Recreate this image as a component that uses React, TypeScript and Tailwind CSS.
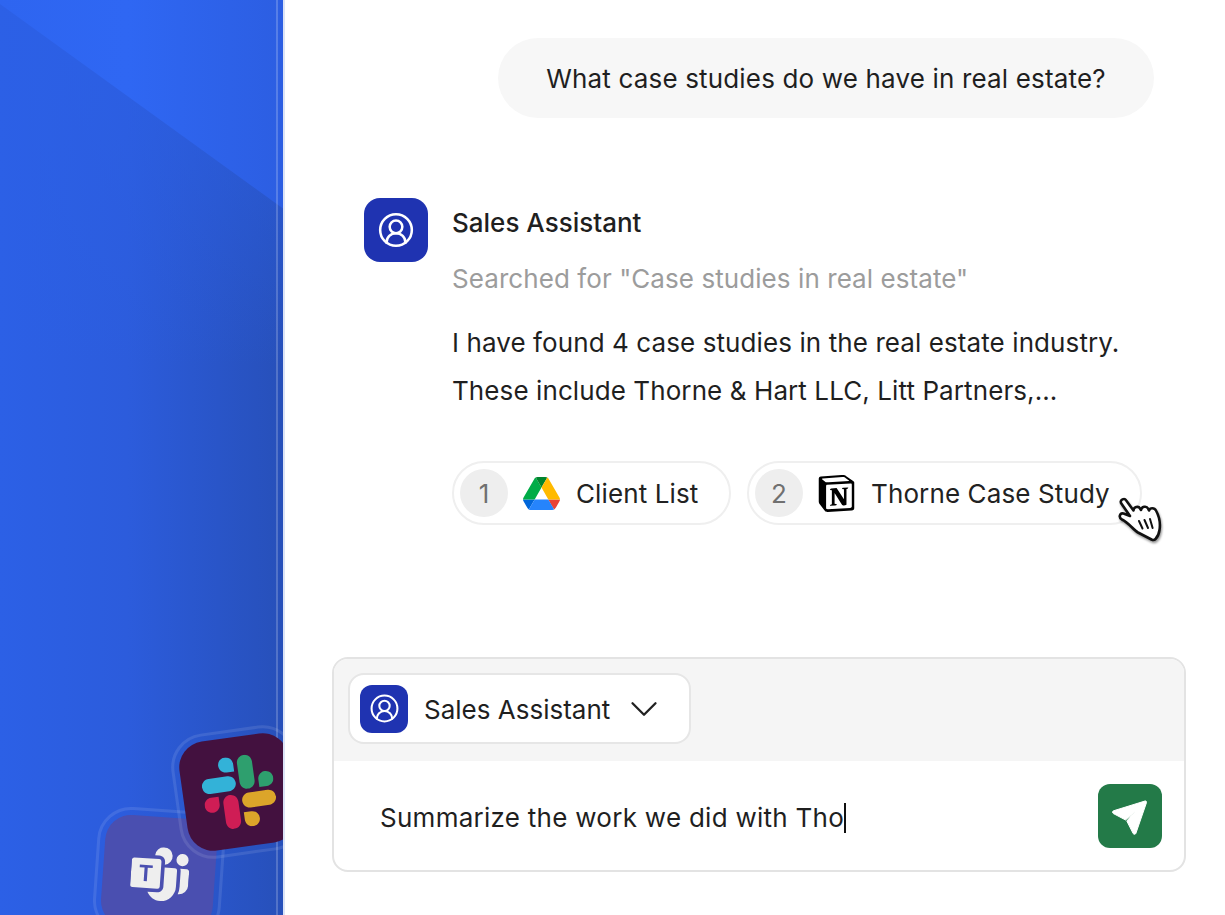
import React from 'react';
import { ChevronDown, CircleUserRound } from 'lucide-react';
import { BsMicrosoftTeams } from 'react-icons/bs';
import { SiNotion } from 'react-icons/si';

const DriveLogo = () => (
  <svg viewBox="0 0 87.3 78" className="w-[37px] h-[33px]">
    <path d="m6.6 66.85 3.85 6.65c.8 1.4 1.95 2.5 3.3 3.3l13.75-23.8h-27.5c0 1.55.4 3.1 1.2 4.5z" fill="#0066da" />
    <path d="m43.65 25-13.75-23.8c-1.35.8-2.5 1.9-3.3 3.3l-25.4 44a9.06 9.06 0 0 0 -1.2 4.5h27.5z" fill="#00ac47" />
    <path d="m73.55 76.8c1.35-.8 2.5-1.9 3.3-3.3l1.6-2.75 7.65-13.25c.8-1.4 1.2-2.95 1.2-4.5h-27.502l5.852 11.5z" fill="#ea4335" />
    <path d="m43.65 25 13.75-23.8c-1.35-.8-2.9-1.2-4.5-1.2h-18.5c-1.6 0-3.15.45-4.5 1.2z" fill="#00832d" />
    <path d="m59.8 53h-32.3l-13.75 23.8c1.35.8 2.9 1.2 4.5 1.2h50.8c1.6 0 3.15-.45 4.5-1.2z" fill="#2684fc" />
    <path d="m73.4 26.5-12.7-22c-.8-1.4-1.95-2.5-3.3-3.3l-13.75 23.8 16.15 28h27.45c0-1.55-.4-3.1-1.2-4.5z" fill="#ffba00" />
  </svg>
);

const SlackLogo = () => (
  <svg viewBox="0 0 122.8 122.8" className="w-[72px] h-[72px] ml-[2px]">
    <path d="M25.8 77.6c0 7.1-5.8 12.9-12.9 12.9S0 84.7 0 77.6s5.8-12.9 12.9-12.9h12.9v12.9zm6.5 0c0-7.1 5.8-12.9 12.9-12.9s12.9 5.8 12.9 12.9v32.3c0 7.1-5.8 12.9-12.9 12.9s-12.9-5.8-12.9-12.9V77.6z" fill="#CF1D55" />
    <path d="M45.2 25.8c-7.1 0-12.9-5.8-12.9-12.9S38.1 0 45.2 0s12.9 5.8 12.9 12.9v12.9H45.2zm0 6.5c7.1 0 12.9 5.8 12.9 12.9s-5.8 12.9-12.9 12.9H12.9C5.8 58.1 0 52.3 0 45.2s5.8-12.9 12.9-12.9h32.3z" fill="#33B2D8" />
    <path d="M97 45.2c0-7.1 5.8-12.9 12.9-12.9s12.9 5.8 12.9 12.9-5.8 12.9-12.9 12.9H97V45.2zm-6.5 0c0 7.1-5.8 12.9-12.9 12.9s-12.9-5.8-12.9-12.9V12.9C64.7 5.8 70.5 0 77.6 0s12.9 5.8 12.9 12.9v32.3z" fill="#2E9F6E" />
    <path d="M77.6 97c7.1 0 12.9 5.8 12.9 12.9s-5.8 12.9-12.9 12.9-12.9-5.8-12.9-12.9V97h12.9zm0-6.5c-7.1 0-12.9-5.8-12.9-12.9s5.8-12.9 12.9-12.9h32.3c7.1 0 12.9 5.8 12.9 12.9s-5.8 12.9-12.9 12.9H77.6z" fill="#DCA52A" />
  </svg>
);

const SendIcon = () => (
  <svg viewBox="0 0 64 64" className="w-16 h-16">
    <path
      d="M47 17 15.5 26.8a1.5 1.5 0 0 0 -.2 2.7L27.6 36l9.6-9-8.4 10 6.4 12.6a1.5 1.5 0 0 0 2.7-.3L48.5 18.5a1.2 1.2 0 0 0 -1.5-1.5z"
      fill="#fff"
      stroke="#fff"
      strokeLinejoin="round"
    />
  </svg>
);

const HandCursor = () => (
  <svg viewBox="0 0 48 48" className="absolute left-[1116px] top-[495px] w-12 h-12 drop-shadow-[1px_2px_1px_rgba(0,0,0,0.4)]">
    <path
      d="M5 8C3.8 4.6 8.4 2.6 10.2 5.4L17.5 15.5C17.5 12 22.5 10.5 24 13.5L25 15C25.5 11.5 30.5 10.5 32 13.5L33 15.5C34 12.5 38.5 12.5 40 15.5C43.5 22 44.5 29 43.5 35C43 39 41.5 42 39.5 44C38.5 45 37 45.2 35.5 44.5L22 37.5C17.5 35 12.5 27.5 6 24.5C2 22.5 4 17.5 7.5 18.5L14 21Z"
      fill="#fff"
      stroke="#111"
      strokeWidth="2.6"
      strokeLinejoin="round"
    />
    <path d="M23 26l3.5 7.5M28.5 25l3.5 8M34 24l2.6 9" fill="none" stroke="#111" strokeWidth="2" strokeLinecap="round" />
  </svg>
);

const AssistantAvatar = ({ big }: { big?: boolean }) => (
  <div className={big ? 'w-16 h-16 shrink-0 rounded-2xl bg-[#1f33b1] flex items-center justify-center text-white' : 'w-12 h-12 shrink-0 rounded-xl bg-[#1f33b1] flex items-center justify-center text-white'}>
    <CircleUserRound size={big ? 38 : 31} strokeWidth={1.6} />
  </div>
);

const Source = ({ n, label, icon, className }: { n: number; label: string; icon: React.ReactNode; className: string }) => (
  <div className={`h-16 flex items-center rounded-full border-2 border-[#efefef] pl-[6px] tracking-[0.12px] ${className}`}>
    <span className="w-12 h-12 rounded-full bg-[#eeeeee] flex items-center justify-center text-[#707070] text-[26px]">{n}</span>
    <span className="ml-[15px] w-[37px] flex justify-center">{icon}</span>
    <span className="ml-[16px] text-[#222]">{label}</span>
  </div>
);

export default function App() {
  return (
    <div className="relative flex h-[915px] w-[1225px] overflow-hidden bg-white text-[26px] text-[#1f1f1f] font-['Inter',sans-serif]">
      <aside className="relative w-[285px] shrink-0 overflow-hidden border-r-2 border-r-[#dbe3f6] bg-[linear-gradient(90deg,#2c60e6_0%,#2c5cdc_45%,#2750ba_100%)]">
        <div className="absolute inset-0 bg-[linear-gradient(180deg,rgba(44,96,230,0.8),rgba(44,96,230,0)_40%)]" />
        <div className="absolute inset-0 bg-[linear-gradient(90deg,#2e65f0_0%,#2f67f3_45%,#2c5ee2_100%)] [clip-path:polygon(0_4px,285px_210px,285px_0,0_0)]" />
        <div className="absolute right-[5px] top-0 bottom-0 w-[2px] bg-white/20" />
        <div className="absolute left-[103px] top-[817px] w-[112px] h-[112px] rotate-[4deg] rounded-[26px] bg-[#4a4fb0] outline-[3px] outline-offset-[5px] outline-white/10 flex items-center justify-center text-[#eeeeee]">
          <BsMicrosoftTeams size={58} className="mt-[6px] ml-[2px]" />
        </div>
        <div className="absolute left-[183px] top-[737px] w-[110px] h-[110px] -rotate-[8deg] rounded-[26px] bg-[#43113f] outline-[3px] outline-offset-[5px] outline-white/10 flex items-center justify-center">
          <SlackLogo />
        </div>
      </aside>

      <main className="relative flex-1 flex flex-col pt-[38px] pl-[47px] pr-[39px]">
        <div className="self-end mr-[32px] h-20 w-[656px] flex items-center justify-center rounded-[40px] bg-[#f7f7f7] tracking-[0.16px]">
          What case studies do we have in real estate?
        </div>

        <div className="mt-[80px] ml-[32px] flex gap-6">
          <AssistantAvatar big />
          <div className="flex-1">
            <div className="font-medium leading-[50px]">Sales Assistant</div>
            <div className="mt-[6px] leading-[50px] text-[#9c9c9c] tracking-[0.07px]">Searched for "Case studies in real estate"</div>
            <p className="mt-[15px] leading-[48px] tracking-[0.09px]">
              I have found 4 case studies in the real estate industry.
              <br />
              These include Thorne &amp; Hart LLC, Litt Partners,...
            </p>
            <div className="mt-[46px] flex gap-4">
              <Source n={1} label="Client List" icon={<DriveLogo />} className="w-[279px]" />
              <Source n={2} label="Thorne Case Study" icon={<SiNotion size={37} className="text-black" />} className="w-[395px]" />
            </div>
          </div>
        </div>

        <div className="mt-[132px] h-[215px] flex flex-col rounded-2xl border-2 border-[#e3e3e3] overflow-hidden">
          <div className="h-[102px] shrink-0 bg-[#f5f5f5] pt-[14px] pl-[14px]">
            <div className="w-[343px] h-[71px] rounded-2xl border-2 border-[#e6e6e6] bg-white flex items-center pl-[10px]">
              <AssistantAvatar />
              <span className="ml-4 pt-[1px]">Sales Assistant</span>
              <ChevronDown size={46} strokeWidth={1.2} className="ml-[11px] text-[#222]" />
            </div>
          </div>
          <div className="flex-1 flex items-center pl-[46px] pr-[22px]">
            <span className="flex-1 pt-[3px] tracking-[0.27px]">
              Summarize the work we did with Tho<span className="inline-block w-[2px] h-[30px] bg-[#111] align-[-6px]" />
            </span>
            <div className="w-16 h-16 rounded-xl bg-[#237a48]">
              <SendIcon />
            </div>
          </div>
        </div>
      </main>

      <div className="absolute inset-0 pointer-events-none">
        <HandCursor />
      </div>
    </div>
  );
}
